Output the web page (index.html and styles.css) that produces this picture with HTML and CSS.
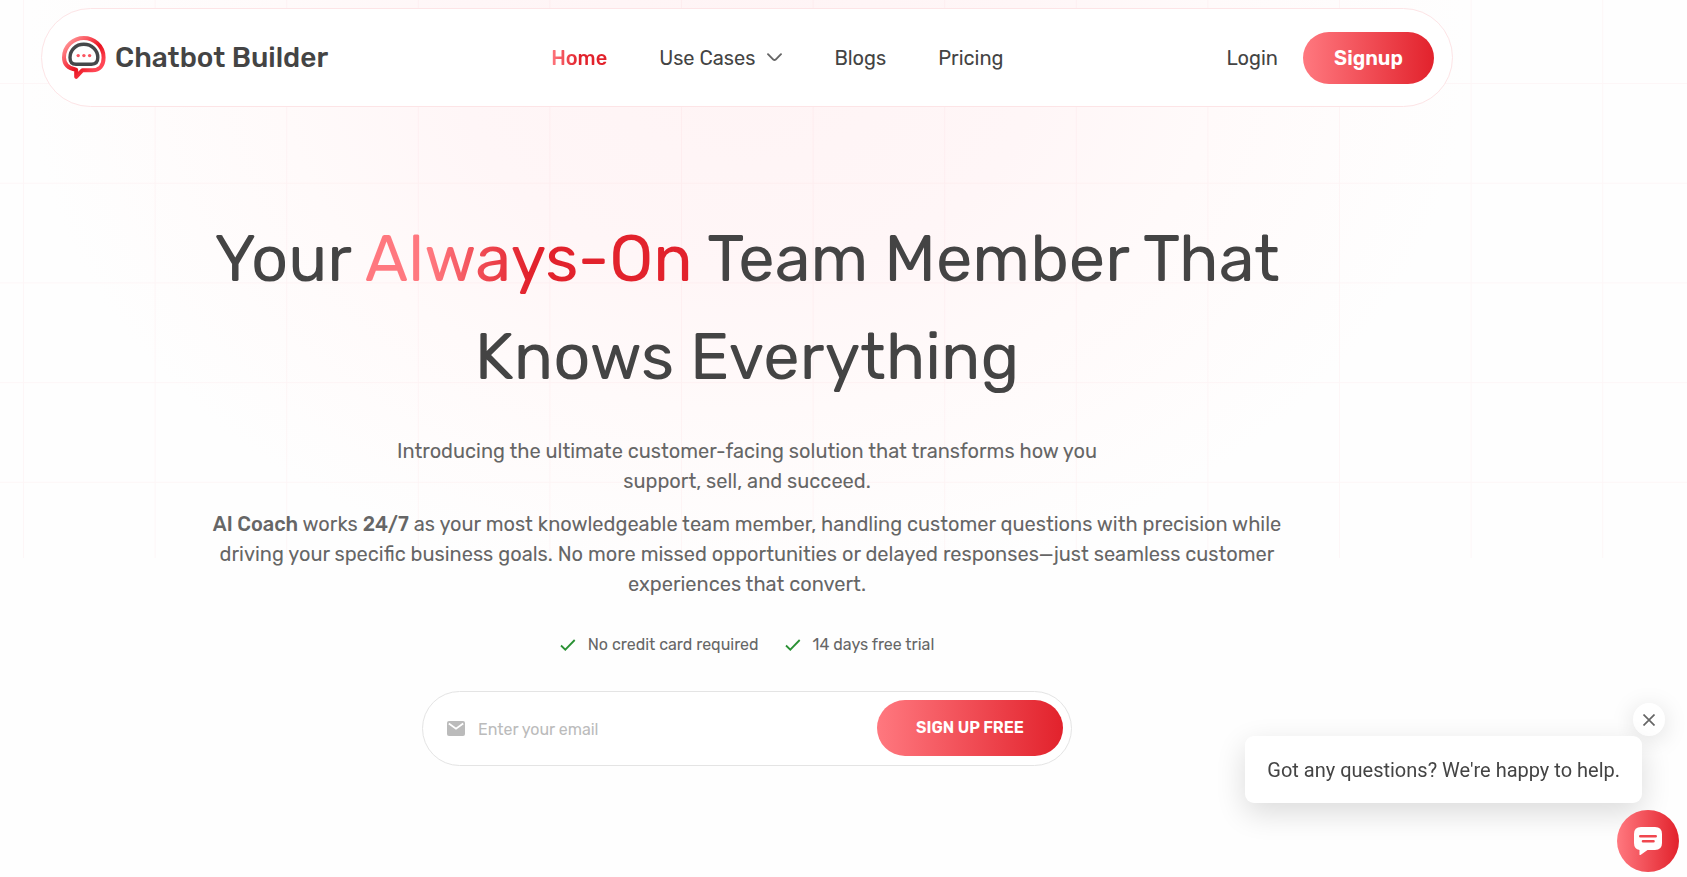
FILE: index.html
```html
<!DOCTYPE html>
<html lang="en">
<head>
<meta charset="utf-8">
<meta name="viewport" content="width=device-width, initial-scale=1">
<title>Chatbot Builder</title>
<link rel="stylesheet" href="styles.css">
</head>
<body>
<div class="backdrop">
<svg class="grid-lines" width="100%" height="100%" aria-hidden="true">
  <defs>
    <pattern id="cells" x="23" y="83" width="131.6" height="99.7" patternUnits="userSpaceOnUse">
      <path d="M0 .5H132M.5 0V100" stroke="#e2222c" stroke-opacity=".035" fill="none"/>
    </pattern>
  </defs>
  <rect width="100%" height="100%" fill="url(#cells)"/>
</svg>
</div>
<div class="page">
  <header class="header">
    <a class="brand" href="#">
      <svg class="brand-mark" viewBox="0 0 44 44" aria-hidden="true">
        <defs>
          <linearGradient id="ring" x1="0" y1="0" x2="1" y2="1">
            <stop offset="0" stop-color="#ff6b70"/>
            <stop offset=".12" stop-color="#ff8a8d"/>
            <stop offset=".35" stop-color="#f84a54"/>
            <stop offset=".55" stop-color="#e8121f"/>
            <stop offset=".8" stop-color="#ff4654"/>
          </linearGradient>
        </defs>
        <path d="M21.800 2C31.500 2 41.600 9.500 41.600 21.500C41.600 29.500 37.500 34.200 30.500 34.200H20.500L14.200 40.800V33.700C6.500 32.500 2 28.500 2 21.500C2 9.500 12 2 21.800 2Z" fill="#fff" stroke="url(#ring)" stroke-width="4" stroke-linejoin="round"/>
        <path d="M21.800 8.300C30 8.300 35.800 14.500 35.800 21.500C35.800 26.500 33.500 28.200 29.500 28.200H14C10 28.200 8 26.500 8 21.500C8 14.500 13.600 8.300 21.800 8.300Z" fill="#fff" stroke="#45484a" stroke-width="3.400"/>
        <g fill="#fb5560"><circle cx="16.200" cy="19.600" r="1.700"/><circle cx="21.900" cy="19.600" r="1.700"/><circle cx="27.600" cy="19.600" r="1.700"/></g>
      </svg>
      <span>Chatbot Builder</span>
    </a>
    <nav class="nav">
      <a class="nav-link active" href="#">Home</a>
      <a class="nav-link" href="#">Use Cases
        <svg width="15" height="9" viewBox="0 0 15 9" aria-hidden="true"><path d="M1 1.200L6.300 6.600Q7.500 7.600 8.700 6.600L14 1.200" fill="none" stroke="#666" stroke-width="1.900" stroke-linecap="round"/></svg>
      </a>
      <a class="nav-link" href="#">Blogs</a>
      <a class="nav-link" href="#">Pricing</a>
    </nav>
    <div class="account">
      <a class="nav-link" href="#">Login</a>
      <button class="signup" type="button">Signup</button>
    </div>
  </header>

  <main class="hero">
    <h1>Your <span class="accent">Always-On</span> Team Member That Knows Everything</h1>
    <p class="intro">Introducing the ultimate customer-facing solution that transforms how you support, sell, and succeed.</p>
    <p class="detail"><strong>AI Coach</strong> works <strong>24/7</strong> as your most knowledgeable team member, handling customer questions with precision while driving your specific business goals. No more missed opportunities or delayed responses—just seamless customer experiences that convert.</p>
    <ul class="perks">
      <li><svg width="16" height="12" viewBox="0 0 16 12" aria-hidden="true"><path d="M1 6.500L5.300 10.700L14.700 1" fill="none" stroke="#2a9134" stroke-width="1.800"/></svg>No credit card required</li>
      <li><svg width="16" height="12" viewBox="0 0 16 12" aria-hidden="true"><path d="M1 6.500L5.300 10.700L14.700 1" fill="none" stroke="#2a9134" stroke-width="1.800"/></svg>14 days free trial</li>
    </ul>
    <form class="signup-form">
      <svg width="18" height="15" viewBox="0 0 18 15" aria-hidden="true"><rect width="18" height="15" rx="2" fill="#bbb"/><path d="M1.800 2.500L9 7.700L16.200 2.500" fill="none" stroke="#fff" stroke-width="1.800"/></svg>
      <input type="email" placeholder="Enter your email" aria-label="Email">
      <button type="button">SIGN UP FREE</button>
    </form>
  </main>
</div>

<aside class="chat">
  <button class="chat-close" type="button" aria-label="Close">
    <svg width="12" height="12" viewBox="0 0 12 12" aria-hidden="true"><path d="M.5 .5L11.500 11.500M11.500 .5L.5 11.500" stroke="#666" stroke-width="1.700"/></svg>
  </button>
  <p class="chat-text">Got any questions? We're happy to help.</p>
  <button class="chat-open" type="button" aria-label="Open chat">
    <svg width="28" height="28" viewBox="0 0 28 28" aria-hidden="true"><path d="M7 0H21Q28 0 28 7V16Q28 23 21 23H13.500L6.500 28Q5.500 28.500 5.500 27.500V23Q0 22 0 16V7Q0 0 7 0Z" fill="#fff"/><path d="M6.300 9.300H21.700M9 14.200H19.500" stroke="#f0474f" stroke-width="2.600" stroke-linecap="round"/></svg>
  </button>
</aside>
</body>
</html>
```
FILE: styles.css
```css
* { box-sizing: border-box; }

body {
  margin: 0;
  min-height: 100vh;
  background: #fefefe;
  color: #444;
  font-family: Rubik, Roboto, "Open Sans", sans-serif;
  font-size: 20px;
  line-height: 30px;
}

button, input { font: inherit; }
button { border: 0; padding: 0; cursor: pointer; }
a { color: inherit; text-decoration: none; }
svg { display: block; flex: none; }

.backdrop {
  position: absolute;
  inset: 0 0 auto;
  height: 558px;
  z-index: -1;
  background: radial-gradient(ellipse 720px 540px at 747px 60px, #fff4f5 0%, #fff6f7 40%, #fffafa 65%, #fefefe 100%);
}

.page {
  max-width: 1494px;
  padding: 8px 41px 0;
}

.header {
  display: flex;
  align-items: center;
  justify-content: space-between;
  height: 99px;
  padding: 0 18px 0 20px;
  border: 1px solid #fde4e6;
  border-radius: 50px;
  background: #fff;
}

.brand {
  display: flex;
  align-items: center;
  gap: 9px;
  font-size: 28px;
  font-weight: 500;
}
.brand-mark { width: 44px; height: 44px; }

.nav { display: flex; gap: 52px; }
.nav-link { display: flex; align-items: center; gap: 12px; }
.active {
  font-weight: 500;
  color: transparent;
  background: linear-gradient(90deg, #ff787f, #e2222c 50%);
  background-clip: text;
}

.account { display: flex; align-items: center; gap: 25px; }
.signup, .signup-form button, .chat-open {
  background: linear-gradient(90deg, #ff787f, #e2222c);
  color: #fff;
}
.signup {
  width: 131px;
  height: 52px;
  border-radius: 26px;
  font-weight: 600;
}

.hero {
  display: flex;
  flex-direction: column;
  align-items: center;
  max-width: 1100px;
  margin: 0 auto;
  padding-top: 103px;
  text-align: center;
  color: #666;
}
h1 {
  margin: 0;
  color: #444;
  font-size: 65px;
  font-weight: 400;
  line-height: 98px;
}
.accent {
  color: transparent;
  background: linear-gradient(90deg, #ff787f 20%, #e2222c 50%);
  background-clip: text;
}
.intro { max-width: 720px; margin: 30px 0 13px; }
.detail { margin: 0; }
.detail strong { font-weight: 500; }

.perks {
  display: flex;
  gap: 26px;
  margin: 31px 0 0;
  padding: 0;
  list-style: none;
  font-size: 16px;
}
.perks li { display: flex; align-items: center; gap: 12px; }

.signup-form {
  display: flex;
  align-items: center;
  gap: 13px;
  width: 100%;
  max-width: 650px;
  height: 75px;
  margin-top: 31px;
  padding: 0 8px 0 24px;
  border: 1px solid #e4e4e4;
  border-radius: 38px;
  background: #fff;
  font-size: 16px;
}
.signup-form input {
  flex: 1;
  min-width: 0;
  padding: 3px 0 0;
  border: 0;
  outline: 0;
  background: none;
  color: #444;
}
.signup-form input::placeholder { color: #bbb; }
.signup-form button {
  width: 186px;
  height: 56px;
  margin-bottom: 1px;
  border-radius: 28px;
  font-weight: 600;
}

.chat {
  position: fixed;
  right: 8px;
  bottom: 5px;
  display: flex;
  flex-direction: column;
  align-items: flex-end;
  font-family: Roboto, sans-serif;
}
.chat-close {
  display: grid;
  place-items: center;
  width: 32px;
  height: 33px;
  margin-right: 14px;
  border-radius: 50%;
  background: #fff;
  box-shadow: 0 4px 24px rgba(0, 0, 0, .13);
}
.chat-text {
  margin: 0 37px 7px 0;
  padding: 19px 22px 18px;
  border-radius: 9px;
  background: #fff;
  box-shadow: 0 10px 30px rgba(0, 0, 0, .14);
}
.chat-open {
  display: grid;
  place-items: center;
  width: 62px;
  height: 62px;
  border-radius: 50%;
}
```
